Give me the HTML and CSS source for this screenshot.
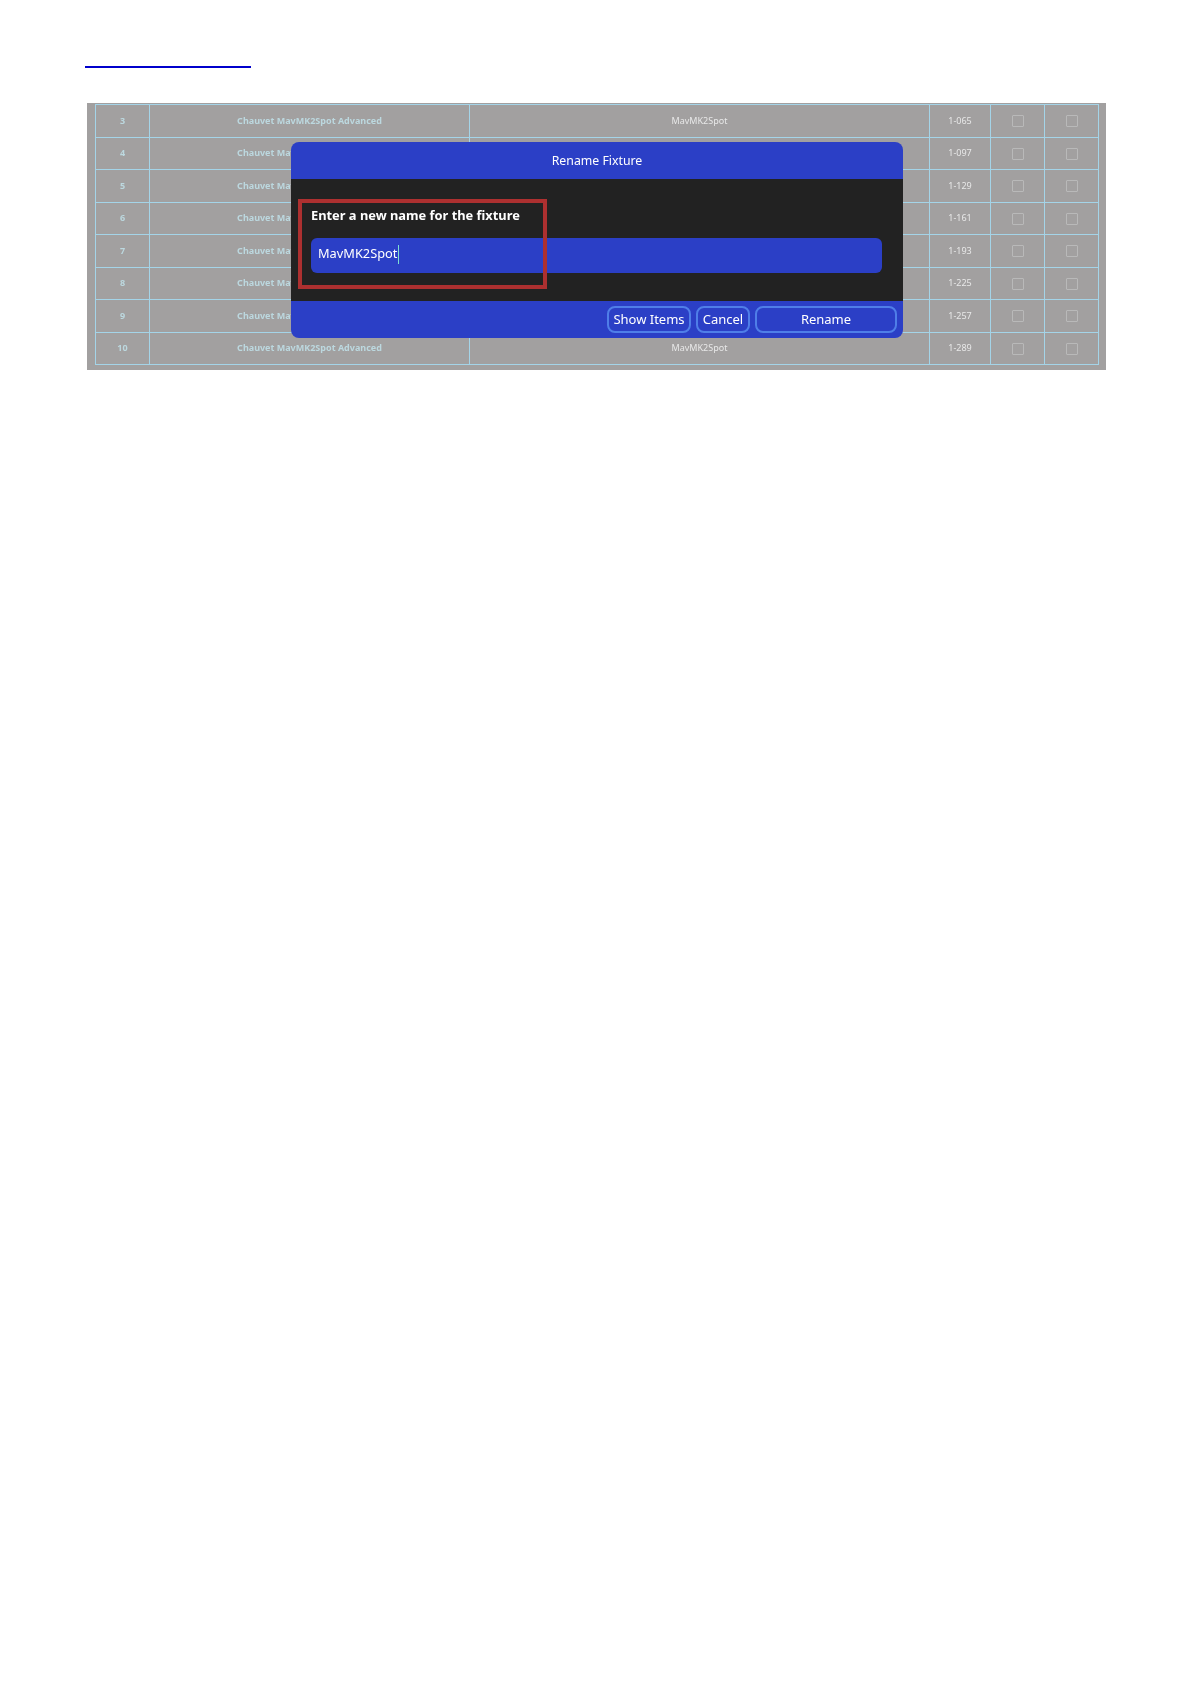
FILE: index.html
```html
<!DOCTYPE html>
<html lang="en">
<head>
  <meta charset="UTF-8" />
  <title>Rename Fixture</title>
  <link rel="stylesheet" href="styles.css">
</head>
<body>
  <a class="page-link" href="#"></a>
  <div class="shot">
    <table class="fixtures">
      <colgroup>
        <col class="col-id"><col class="col-name"><col class="col-short"><col class="col-addr"><col class="col-check"><col class="col-check">
      </colgroup>
      <tr><td class="strong">3</td><td class="strong">Chauvet MavMK2Spot Advanced</td><td>MavMK2Spot</td><td>1-065</td><td><span class="box"></span></td><td><span class="box"></span></td></tr>
      <tr><td class="strong">4</td><td class="strong">Chauvet MavMK2Spot Advanced</td><td>MavMK2Spot</td><td>1-097</td><td><span class="box"></span></td><td><span class="box"></span></td></tr>
      <tr><td class="strong">5</td><td class="strong">Chauvet MavMK2Spot Advanced</td><td>MavMK2Spot</td><td>1-129</td><td><span class="box"></span></td><td><span class="box"></span></td></tr>
      <tr><td class="strong">6</td><td class="strong">Chauvet MavMK2Spot Advanced</td><td>MavMK2Spot</td><td>1-161</td><td><span class="box"></span></td><td><span class="box"></span></td></tr>
      <tr><td class="strong">7</td><td class="strong">Chauvet MavMK2Spot Advanced</td><td>MavMK2Spot</td><td>1-193</td><td><span class="box"></span></td><td><span class="box"></span></td></tr>
      <tr><td class="strong">8</td><td class="strong">Chauvet MavMK2Spot Advanced</td><td>MavMK2Spot</td><td>1-225</td><td><span class="box"></span></td><td><span class="box"></span></td></tr>
      <tr><td class="strong">9</td><td class="strong">Chauvet MavMK2Spot Advanced</td><td>MavMK2Spot</td><td>1-257</td><td><span class="box"></span></td><td><span class="box"></span></td></tr>
      <tr><td class="strong">10</td><td class="strong">Chauvet MavMK2Spot Advanced</td><td>MavMK2Spot</td><td>1-289</td><td><span class="box"></span></td><td><span class="box"></span></td></tr>
    </table>

    <div class="dialog">
      <div class="dialog-title">Rename Fixture</div>
      <div class="dialog-body">
        <label class="dialog-label">Enter a new name for the fixture</label>
        <div class="name-input">MavMK2Spot<span class="caret"></span></div>
      </div>
      <div class="dialog-footer">
        <button class="btn btn-items">Show Items</button>
        <button class="btn btn-cancel">Cancel</button>
        <button class="btn btn-rename">Rename</button>
      </div>
    </div>
    <div class="callout"></div>
  </div>
</body>
</html>
```

FILE: styles.css
```css
body { margin: 0; background: white; font-family: "Noto Sans", sans-serif; color: #fff; }
.page-link { display: block; width: 166px; height: 66px; margin-left: 85px; border-bottom: 2px solid #0000cc; }
.shot { position: relative; width: 1019px; height: 267px; margin: 35px 0 0 87px; padding: 1px 0 0 8px; box-sizing: border-box; background: #a2a0a0; filter: blur(0.35px); }
.fixtures { border-collapse: collapse; table-layout: fixed; width: 1002px; }
.col-id { width: 54px; }
.col-name { width: 320px; }
.col-short { width: 460px; }
.col-addr { width: 61px; }
.col-check { width: 54px; }
.fixtures td { height: 32.5px; padding: 0 0 1px; box-sizing: border-box; border: 1px solid #a4d4e8; text-align: center; font-size: 9px; color: #e8e8e8; }
.fixtures td.strong { font-weight: 700; color: #bcd8df; }
.box { display: inline-block; width: 10px; height: 10px; border: 1px solid #b9b9b9; border-radius: 1px; vertical-align: middle; }
.dialog { position: absolute; left: 204px; top: 39px; width: 612px; height: 196px; display: flex; flex-direction: column; border-radius: 8px; overflow: hidden; background: #2b3fc6; }
.dialog-title { height: 37px; line-height: 37px; text-align: center; font-size: 12.3px; }
.dialog-body { flex: 1; background: #222222; padding: 26px 21px 0 20px; }
.dialog-label { display: block; font-size: 12.85px; font-weight: 700; line-height: 20px; }
.name-input { margin-top: 13px; height: 35px; line-height: 31px; padding-left: 7px; border-radius: 6px; background: #2b3fc6; font-size: 12.8px; }
.caret { display: inline-block; width: 1px; height: 19px; margin-left: 1px; background: #7fe0d0; vertical-align: middle; }
.dialog-footer { height: 37px; display: flex; justify-content: flex-end; align-items: center; gap: 5px; padding-right: 6px; }
.btn { height: 27px; padding: 0 0 2px; border: 2px solid #4f7ee8; border-radius: 8px; background: #2b3fc6; color: #fff; font-family: inherit; font-size: 13px; }
.btn-items { width: 84px; }
.btn-cancel { width: 54px; }
.btn-rename { width: 142px; }
.callout { position: absolute; left: 211px; top: 96px; width: 249px; height: 90px; box-sizing: border-box; border: 4px solid #ad3030; }
```
